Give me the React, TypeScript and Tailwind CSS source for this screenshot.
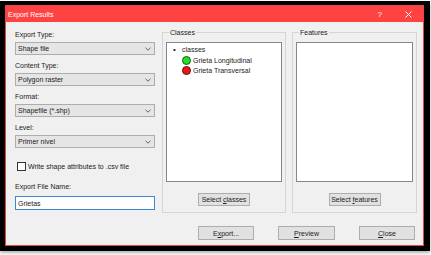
import React from "react";

const Chevron: React.FC = () => (
  <svg width="6" height="4" viewBox="0 0 6 4" className="shrink-0">
    <path d="M0.5 0.8 L3 3.2 L5.5 0.8" fill="none" stroke="#555" strokeWidth="0.9" />
  </svg>
);

const Select: React.FC<{ value: string }> = ({ value }) => (
  <div className="mt-[3px] flex h-[13px] w-[140px] items-center justify-between border border-[#adadad] bg-[#e5e5e5] pl-[2px] pr-[3px]">
    <span>{value}</span>
    <Chevron />
  </div>
);

const Button: React.FC<{ className?: string; children: React.ReactNode }> = ({
  className,
  children,
}) => (
  <div
    className={`flex items-center justify-center border border-[#adadad] bg-[#e1e1e1] ${className ?? ""}`}
  >
    {children}
  </div>
);

const App: React.FC = () => {
  const fields = [
    { label: "Export Type:", value: "Shape file" },
    { label: "Content Type:", value: "Polygon raster" },
    { label: "Format:", value: "Shapefile (*.shp)" },
    { label: "Level:", value: "Primer nivel" },
  ];

  return (
    <div className="h-[255px] w-[431px] bg-white pt-[1px] font-['Liberation_Sans',Arial,sans-serif] text-[7px] leading-[9px] text-[#1b1b1b]">
      <div className="h-[250px] w-[430px] bg-black pb-[5px] pl-[5px] pr-[6px] pt-[4px] shadow-[0_2px_3px_rgba(0,0,0,0.3)]">
        <div className="flex h-full flex-col border border-[#e24848] bg-[#f0f0f0]">
          {/* title bar */}
          <div className="flex h-[16px] shrink-0 items-center bg-[#ff4242] pl-[2px] text-white">
            <span className="flex-1">Export Results</span>
            <span className="mr-[23px] text-[8px]">?</span>
            <svg width="7" height="7" viewBox="0 0 7 7" className="mr-[11px]">
              <path d="M0.5 0.5 L6.5 6.5 M6.5 0.5 L0.5 6.5" stroke="#fff" strokeWidth="1" />
            </svg>
          </div>

          {/* body */}
          <div className="flex flex-1 flex-col">
            <div className="flex">
              <div className="ml-[9px] mt-[8px] flex w-[140px] flex-col">
                {fields.map((f, i) => (
                  <div key={f.label} className={i === 0 ? "" : "mt-[6px]"}>
                    <div>{f.label}</div>
                    <Select value={f.value} />
                  </div>
                ))}
                <div className="mt-[14px] flex items-center">
                  <div className="ml-[2px] h-[9px] w-[9px] border border-[#333] bg-white" />
                  <span className="ml-[2px]">Write shape attributes to .csv file</span>
                </div>
                <div className="mt-[11px]">Export File Name:</div>
                <div className="mt-[5px] flex h-[14px] items-center border border-[#3d86d4] bg-white pl-[2px]">
                  Grietas
                </div>
              </div>

              <fieldset className="ml-[7px] mt-[6px] flex h-[185px] w-[124px] flex-col items-center border border-[#d5d5d5] px-[3px]">
                <legend className="ml-[3px] px-[1px]">Classes</legend>
                <div className="mt-[5px] h-[140px] w-full border border-[#828790] bg-white pl-[6px] pt-[2px]">
                  <div className="flex items-center h-[9px]">
                    <span className="w-[9px] text-[8px]">•</span>
                    <span>classes</span>
                  </div>
                  <div className="ml-[9px] mt-[1px] flex h-[10px] items-center">
                    <span className="h-[9px] w-[9px] rounded-full border border-[#1a5a1a] bg-[#22e022]" />
                    <span className="ml-[2px]">Grieta Longitudinal</span>
                  </div>
                  <div className="ml-[9px] flex h-[10px] items-center">
                    <span className="h-[9px] w-[9px] rounded-full border border-[#5a1010] bg-[#f01414]" />
                    <span className="ml-[2px]">Grieta Transversal</span>
                  </div>
                </div>
                <Button className="mt-[11px] h-[13px] w-[52px]">
                  <span>
                    Select <u>c</u>lasses
                  </span>
                </Button>
              </fieldset>

              <fieldset className="ml-[6px] mt-[6px] flex h-[185px] w-[125px] flex-col items-center border border-[#d5d5d5] px-[3px]">
                <legend className="ml-[3px] px-[1px]">Features</legend>
                <div className="mt-[5px] h-[140px] w-full border border-[#828790] bg-white" />
                <Button className="mt-[11px] h-[13px] w-[52px]">
                  <span>
                    Select <u>f</u>eatures
                  </span>
                </Button>
              </fieldset>
            </div>

            <div className="mt-[13px] flex justify-end gap-[24px] pr-[8px]">
              <Button className="h-[14px] w-[56px]">
                <span>
                  E<u>x</u>port...
                </span>
              </Button>
              <Button className="h-[14px] w-[57px]">
                <span>
                  <u>P</u>review
                </span>
              </Button>
              <Button className="h-[14px] w-[56px]">
                <span>
                  <u>C</u>lose
                </span>
              </Button>
            </div>
          </div>
        </div>
      </div>
    </div>
  );
};

export default App;
